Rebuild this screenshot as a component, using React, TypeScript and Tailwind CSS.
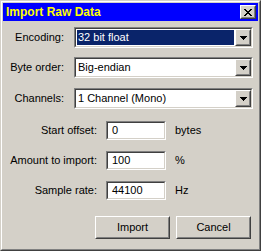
import clsx from "clsx";

const font = "font-['Liberation_Sans',Arial,sans-serif]";

// classic 3d edges
const raisedOuter = "border border-t-white border-l-white border-r-[#404040] border-b-[#404040]";
const raisedInner = "border border-t-[#d4d0c8] border-l-[#d4d0c8] border-r-[#808080] border-b-[#808080]";
const sunkenOuter = "border border-t-[#808080] border-l-[#808080] border-r-white border-b-white";
const sunkenInner = "border border-t-[#404040] border-l-[#404040] border-r-[#d4d0c8] border-b-[#d4d0c8]";

function CloseGlyph() {
  const px: [number, number][] = [
    [0, 0], [1, 0], [6, 0], [7, 0],
    [1, 1], [2, 1], [5, 1], [6, 1],
    [2, 2], [3, 2], [4, 2], [5, 2],
    [3, 3], [4, 3],
    [2, 4], [3, 4], [4, 4], [5, 4],
    [1, 5], [2, 5], [5, 5], [6, 5],
    [0, 6], [1, 6], [6, 6], [7, 6],
  ];
  return (
    <svg width="8" height="7" viewBox="0 0 8 7" shapeRendering="crispEdges">
      {px.map(([x, y]) => (
        <rect key={`${x}-${y}`} x={x} y={y} width="1" height="1" fill="#000" />
      ))}
    </svg>
  );
}

function Arrow() {
  return (
    <svg width="7" height="4" viewBox="0 0 7 4" shapeRendering="crispEdges">
      <rect x="0" y="0" width="7" height="1" fill="#000" />
      <rect x="1" y="1" width="5" height="1" fill="#000" />
      <rect x="2" y="2" width="3" height="1" fill="#000" />
      <rect x="3" y="3" width="1" height="1" fill="#000" />
    </svg>
  );
}

function Combo({ value, selected }: { value: string; selected?: boolean }) {
  return (
    <div className={clsx("w-[179px] h-[21px]", sunkenOuter)}>
      <div className={clsx("h-full flex bg-white", sunkenInner)}>
        <div className="flex-1 p-[1px]">
          <div
            className={clsx(
              "h-full flex items-center pl-[1px]",
              selected ? "bg-[#0a246a] text-white" : "text-black"
            )}
          >
            {value}
          </div>
        </div>
        <div className={clsx("w-[16px] h-full bg-[#d4d0c8]", raisedOuter)}>
          <div className={clsx("h-full flex items-center justify-center pt-[1px]", raisedInner)}>
            <Arrow />
          </div>
        </div>
      </div>
    </div>
  );
}

function ComboRow({ label, value, selected, className }: { label: string; value: string; selected?: boolean; className?: string }) {
  return (
    <div className={clsx("flex items-center", className)}>
      <div className="w-[61px] text-right">{label}</div>
      <div className="ml-[10px]">
        <Combo value={value} selected={selected} />
      </div>
    </div>
  );
}

function InputRow({ label, value, unit, className }: { label: string; value: string; unit: string; className?: string }) {
  return (
    <div className={clsx("flex items-center", className)}>
      <div className="w-[94px] text-right">{label}</div>
      <div className={clsx("ml-[9px] w-[60px] h-[19px]", sunkenOuter)}>
        <div className={clsx("h-full bg-white flex items-center pl-[4px]", sunkenInner)}>{value}</div>
      </div>
      <div className="ml-[9px]">{unit}</div>
    </div>
  );
}

function Button({ children }: { children: string }) {
  return (
    <div className={clsx("w-[75px] h-[23px] bg-[#d4d0c8]", raisedOuter)}>
      <div className={clsx("h-full flex items-center justify-center", raisedInner)}>{children}</div>
    </div>
  );
}

export default function App() {
  return (
    <div className={clsx("w-[261px] h-[251px] bg-[#d4d0c8] text-black text-[11px] leading-none", font)}>
      <div className="h-full border border-t-[#d4d0c8] border-l-[#d4d0c8] border-r-[#404040] border-b-[#404040]">
        <div className="h-full border border-t-white border-l-white border-r-[#808080] border-b-[#808080] p-[1px] flex flex-col">
          {/* Title bar */}
          <div className="h-[18px] bg-[#0000ff] flex items-center pl-[3px] pr-[2px]">
            <span className="font-bold text-[12px] text-[#ffff00]">Import Raw Data</span>
            <div className={clsx("ml-auto w-[16px] h-[14px] bg-[#d4d0c8]", raisedOuter)}>
              <div className={clsx("h-full flex items-center justify-center", raisedInner)}>
                <CloseGlyph />
              </div>
            </div>
          </div>

          <ComboRow className="mt-[6px]" label="Encoding:" value="32 bit float" selected />
          <ComboRow className="mt-[9px]" label="Byte order:" value="Big-endian" />
          <ComboRow className="mt-[10px]" label="Channels:" value="1 Channel (Mono)" />

          <InputRow className="mt-[12px]" label="Start offset:" value="0" unit="bytes" />
          <InputRow className="mt-[11px]" label="Amount to import:" value="100" unit="%" />
          <InputRow className="mt-[11px]" label="Sample rate:" value="44100" unit="Hz" />

          <div className="mt-[16px] flex justify-end gap-[6px] pr-[7px]">
            <Button>Import</Button>
            <Button>Cancel</Button>
          </div>
        </div>
      </div>
    </div>
  );
}
